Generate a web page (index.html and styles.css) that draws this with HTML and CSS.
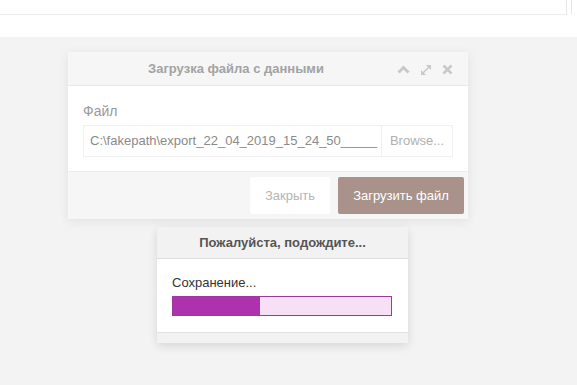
FILE: index.html
```html
<!DOCTYPE html>
<html lang="ru">
  <head>
    <meta charset="UTF-8" />
    <title>Загрузка файла</title>
    <link rel="stylesheet" href="styles.css">
  </head>
  <body>
    <div class="topbar">
      <div class="top-field"></div>
      <div class="top-side"></div>
    </div>

    <div class="dialog upload-dialog">
      <div class="dialog-header">
        <p class="dialog-title">Загрузка файла с данными</p>
        <div class="header-icons">
          <svg width="13" height="9" viewBox="0 0 13 9">
            <path d="M1.5 7.5 L6.5 2.5 L11.5 7.5" fill="none" stroke="#c9c9c9" stroke-width="3"/>
          </svg>
          <svg width="14" height="14" viewBox="0 0 14 14">
            <path d="M3 11 L11 3" stroke="#c9c9c9" stroke-width="1.6"/>
            <path d="M7 2 H12 V7 Z" fill="#c9c9c9"/>
            <path d="M2 7 V12 H7 Z" fill="#c9c9c9"/>
          </svg>
          <svg width="11" height="11" viewBox="0 0 11 11">
            <path d="M1.5 1.5 L9.5 9.5 M9.5 1.5 L1.5 9.5" stroke="#c9c9c9" stroke-width="2.6"/>
          </svg>
        </div>
      </div>
      <div class="dialog-body">
        <p class="field-label">Файл</p>
        <div class="file-input">
          <div class="file-name">C:\fakepath\export_22_04_2019_15_24_50_____</div>
          <div class="browse">Browse...</div>
        </div>
      </div>
      <div class="dialog-footer">
        <button class="close-button">Закрыть</button>
        <button class="upload-button">Загрузить файл</button>
      </div>
    </div>

    <div class="dialog wait-dialog">
      <div class="wait-header">Пожалуйста, подождите...</div>
      <div class="wait-body">
        <p class="wait-text">Сохранение...</p>
        <div class="progress">
          <div class="progress-fill" style="width: 40%;"></div>
        </div>
      </div>
      <div class="wait-footer"></div>
    </div>
  </body>
</html>
```

FILE: styles.css
```css
body{
  margin: 0;
  height: 385px;
  background-color: #f3f3f3;
  font-family: "Liberation Sans", Arial, sans-serif;
  position: relative;
  overflow: hidden;
}
p{
  margin: 0;
}
.topbar{
  height: 37px;
  background-color: white;
  display: flex;
  gap: 4px;
}
.top-field{
  width: 566px;
  height: 14px;
  border-bottom: 1px solid #ececec;
  border-right: 1px solid #e6e6e6;
}
.top-side{
  flex: 1;
  height: 14px;
  border-left: 1px solid #e6e6e6;
}
.dialog{
  position: absolute;
  background-color: #f6f6f6;
  box-shadow: 0 2px 10px rgba(0, 0, 0, 0.08);
}
.upload-dialog{
  left: 68px;
  top: 52px;
  width: 400px;
}
.dialog-header{
  height: 33px;
  display: flex;
  align-items: center;
  border-bottom: 1px solid #e8e8e8;
}
.dialog-title{
  flex: 1;
  text-align: center;
  font-size: 13px;
  font-weight: bold;
  color: #a3a3a3;
  padding-left: 12px;
}
.header-icons{
  display: flex;
  align-items: center;
  gap: 9px;
  padding: 2px 15px 0 0;
  margin-left: 5px;
}
.dialog-body{
  background-color: white;
  padding: 17px 15px 14px 15px;
  border-bottom: 1px solid #ececec;
}
.field-label{
  font-size: 14px;
  color: #9a9a9a;
  margin-bottom: 6px;
}
.file-input{
  display: flex;
  height: 32px;
  width: 370px;
  border: 1px solid #f0f0f0;
  box-sizing: border-box;
}
.file-name{
  flex: 1;
  font-size: 13px;
  color: #8a8a8a;
  line-height: 30px;
  padding-left: 6px;
  white-space: nowrap;
  overflow: hidden;
}
.browse{
  width: 70px;
  border-left: 1px solid #f0f0f0;
  font-size: 13px;
  color: #b0b0b0;
  line-height: 30px;
  text-align: center;
}
.dialog-footer{
  display: flex;
  justify-content: flex-end;
  gap: 8px;
  padding: 5px 4px 5px 0;
}
.close-button, .upload-button{
  height: 37px;
  border: none;
  border-radius: 2px;
  font-family: "Liberation Sans", Arial, sans-serif;
  font-size: 13px;
}
.close-button{
  width: 80px;
  background-color: white;
  color: #b5b5b5;
}
.upload-button{
  width: 126px;
  background-color: #a8928a;
  color: white;
}
.wait-dialog{
  left: 157px;
  top: 227px;
  width: 251px;
  border-radius: 3px;
  box-shadow: 0 3px 10px rgba(0, 0, 0, 0.12);
}
.wait-header{
  height: 31px;
  line-height: 31px;
  text-align: center;
  font-size: 13px;
  font-weight: bold;
  color: #555;
  background-color: #f2f2f2;
  border-bottom: 1px solid #dedede;
}
.wait-body{
  background-color: white;
  padding: 16px 16px 16px 15px;
  border-bottom: 1px solid #e2e2e2;
}
.wait-text{
  font-size: 13px;
  color: #333;
  margin-bottom: 6px;
}
.progress{
  height: 20px;
  background-color: #f7e0f6;
  border: 1px solid #9c3a9c;
  box-sizing: border-box;
}
.progress-fill{
  height: 100%;
  background-color: #ae32ae;
}
.wait-footer{
  height: 10px;
  background-color: #f2f2f2;
}
```
